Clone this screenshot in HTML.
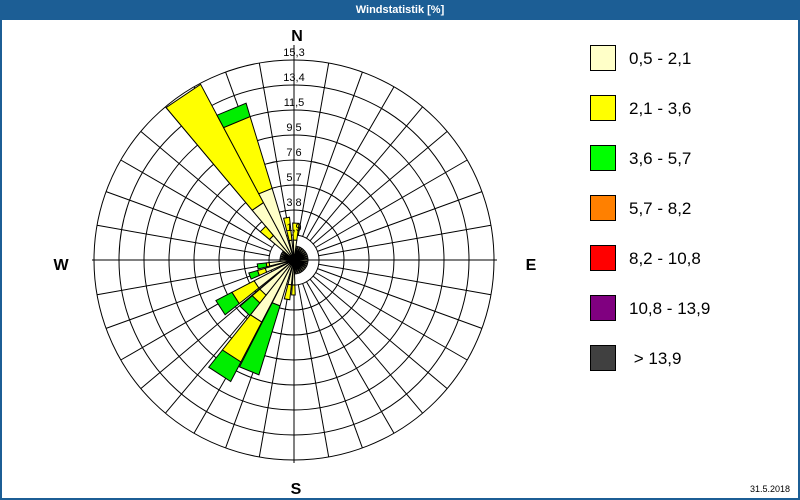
<!DOCTYPE html>
<html><head><meta charset="utf-8"><style>
html,body{margin:0;padding:0;width:800px;height:500px;overflow:hidden;background:#fff;font-family:"Liberation Sans",sans-serif}
#wrap{position:absolute;left:0;top:0;width:796px;height:478px;border:2px solid #1c5e95;border-top:20px solid #1c5e95;background:#fff}
#title{position:absolute;left:0;top:0;width:800px;height:20px;line-height:20px;text-align:center;color:#fff;font-weight:bold;font-size:11px}
svg{position:absolute;left:0;top:0}
</style></head><body>
<div id="wrap"></div>
<div id="title">Windstatistik [%]</div>
<svg id="s" width="800" height="500" xmlns="http://www.w3.org/2000/svg" font-family="Liberation Sans, sans-serif"></svg>
<script>
var cx=294,cy=260,s='';
function P(a,r){var t=a*Math.PI/180;return [(cx+r*Math.sin(t)).toFixed(1),(cy-r*Math.cos(t)).toFixed(1)];}
for(var a=0;a<360;a+=10){var p=P(a,25),q=P(a,200);s+='<line x1="'+p[0]+'" y1="'+p[1]+'" x2="'+q[0]+'" y2="'+q[1]+'" stroke="#000" stroke-width="1"/>';}
for(var k=1;k<=8;k++)s+='<circle cx="'+cx+'" cy="'+cy+'" r="'+(25*k)+'" fill="none" stroke="#000" stroke-width="1"/>';
s+='<line x1="92" y1="260" x2="497" y2="260" stroke="#000"/><line x1="294" y1="45" x2="294" y2="463" stroke="#000"/>';
var L='#ffffc8',Y='#ffff00',G='#00ee00';
var pet=[[326,6,[[0,65,L],[65,199,Y]]],[337.5,5.5,[[0,75,L],[75,150,Y],[150,164,G]]],[350,4,[[0,20,L],[20,43,Y]]],[3,5,[[0,20,L],[20,37,Y]]],[315,5,[[0,32,L],[32,44,Y]]],
[213,5.5,[[0,70,L],[70,115,Y],[115,137,G]]],[202,5,[[0,48,L],[48,120,G]]],[237,5.5,[[0,45,L],[45,70,Y],[70,88,G]]],[224,5.5,[[0,45,L],[45,55,Y],[55,71,G]]],
[190,4,[[0,25,L],[25,40,Y]]],[181,3,[[0,25,L],[25,35,Y]]],[250,4,[[0,30,L],[30,38,Y],[38,47,G]]],[260,4,[[0,25,L],[25,28,Y],[28,37,G]]]];
for(var a=0;a<360;a+=10){s+='<polygon points="'+P(a-3,0)+' '+P(a-3,14)+' '+P(a+3,14)+'" fill="'+L+'" stroke="#000" stroke-width="1"/>';}
pet.forEach(function(p){p[2].forEach(function(g){var a1=p[0]-p[1],a2=p[0]+p[1];
s+='<polygon points="'+P(a1,g[0])+' '+P(a1,g[1])+' '+P(a2,g[1])+' '+P(a2,g[0])+'" fill="'+g[2]+'" stroke="#000" stroke-width="1"/>';});});
s+='<circle cx="'+cx+'" cy="'+cy+'" r="6" fill="#000"/>';
var lab=['1,9','3,8','5,7','7,6','9,5','11,5','13,4','15,3'];
for(var k=1;k<=8;k++)s+='<text x="'+cx+'" y="'+(cy-25*k-4)+'" font-size="11" text-anchor="middle" fill="#000">'+lab[k-1]+'</text>';
s+='<text x="297" y="41" font-size="16" font-weight="bold" text-anchor="middle">N</text><text x="296" y="494" font-size="16" font-weight="bold" text-anchor="middle">S</text><text x="61" y="270" font-size="16" font-weight="bold" text-anchor="middle">W</text><text x="531" y="270" font-size="16" font-weight="bold" text-anchor="middle">E</text>';
var leg=[['#ffffc8','0,5 - 2,1'],['#ffff00','2,1 - 3,6'],['#00ff00','3,6 - 5,7'],['#ff8000','5,7 - 8,2'],['#ff0000','8,2 - 10,8'],['#800080','10,8 - 13,9'],['#404040','\u00a0> 13,9']];
leg.forEach(function(l,i){var y=45+50*i;s+='<rect x="590.5" y="'+(y+0.5)+'" width="25" height="25" fill="'+l[0]+'" stroke="#000"/><text x="629" y="'+(y+19)+'" font-size="17" fill="#000">'+l[1]+'</text>';});
s+='<text x="790" y="492" font-size="9" text-anchor="end">31.5.2018</text>';
document.getElementById('s').innerHTML=s;
</script>
</body></html>
